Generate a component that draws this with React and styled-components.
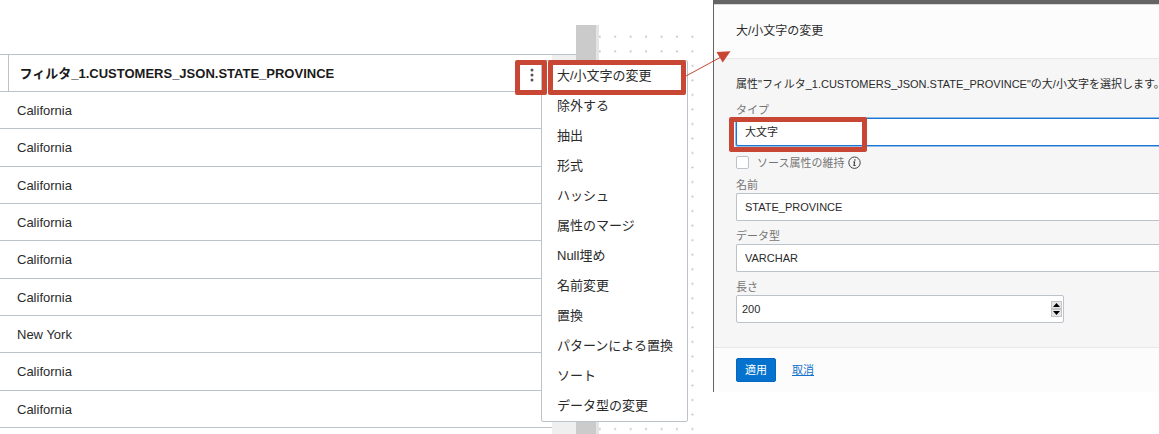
import React from "react";
import styled, { createGlobalStyle, css } from "styled-components";

const accent = "#c74634";
const line = "#bcc2c9";
const sans = `"Liberation Sans", "Noto Sans CJK JP", sans-serif`;

const GlobalStyle = createGlobalStyle`
  *, *::before, *::after { box-sizing: border-box; }
  body { margin: 0; background: #fff; color: #2b2b2b; font: 13px/16px ${sans}; }
  button, input, select { font: inherit; color: inherit; margin: 0; }
`;

const Page = styled.main`
  display: grid;
  grid-template-columns: minmax(0, 713fr) minmax(0, 446fr);
  min-height: 100vh;
  overflow: hidden;
`;

const Workspace = styled.section`
  position: relative;
  display: flex;
  padding: 25px 18px 0 0;
`;

const DataPane = styled.div`
  flex: 1;
  min-width: 0;
  margin-top: 29px;
  display: flex;
  align-items: stretch;
`;

const Table = styled.table`
  width: 100%;
  height: 374px;
  border-collapse: collapse;
  table-layout: fixed;
`;

const Gutter = styled.div`
  width: 24px;
  background: #efefef;
  border-top: 1px solid ${line};
`;

const TableWrap = styled.div`
  flex: 1;
  min-width: 0;
`;

const EdgeHead = styled.th`
  width: 8px;
  height: 37px;
  padding: 0;
  border: 1px solid ${line};
  border-left: 0;
`;

const ColumnHead = styled.th`
  padding: 2px 12px 0 11px;
  border: 1px solid ${line};
  border-right: 0;
  text-align: left;
  color: #1a1a1a;
`;

const HeadContent = styled.div`
  display: flex;
  align-items: center;
  justify-content: space-between;
`;

const Cell = styled.td`
  height: 37px;
  padding: 2px 17px 0;
  border-bottom: 1px solid ${line};
`;

const outlined = css`
  position: relative;
  &::after {
    content: "";
    position: absolute;
    border: 5px solid ${accent};
    border-radius: 2px;
    pointer-events: none;
  }
`;

const KebabButton = styled.button`
  ${outlined}
  z-index: 1;
  display: flex;
  align-items: center;
  justify-content: center;
  width: 16px;
  height: 20px;
  padding: 0;
  border: 0;
  background: none;
  &::after { inset: -4px -7px -11px -9px; }
`;

const KebabIcon = styled.svg`
  margin-bottom: -2px;
`;

const Scrollbar = styled.div`
  width: 23px;
  background: #cbcbcb;
  border-right: 3px solid #e4e4e4;
`;

const DotCanvas = styled.svg`
  width: 96px;
  height: auto;
  align-self: stretch;
`;

const Menu = styled.div`
  position: absolute;
  top: 60px;
  right: 25px;
  width: 147px;
  background: #fff;
  border: 1px solid ${line};
  border-radius: 2px;
`;

const MenuItem = styled.button`
  display: block;
  width: 100%;
  height: 30px;
  padding: 0 15px;
  border: 0;
  background: none;
  text-align: left;
  white-space: nowrap;
  ${(p) => p.$marked && outlined}
  &::after { inset: -1px 1px -4px 6px; }
`;

const Arrow = styled.svg`
  position: absolute;
  top: 48px;
  right: -19px;
  z-index: 2;
`;

const Dialog = styled.section`
  align-self: start;
  border-top: 4px solid #646464;
  border-left: 1px solid #646464;
  background: #fcfcfc;
  font-size: 11px;
`;

const DialogHeader = styled.header`
  padding: 18px 22px;
  border-top: 1px solid #d5d8da;
  border-bottom: 1px solid #e8e8e8;
`;

const DialogTitle = styled.h2`
  margin: 0;
  font-size: 12px;
  font-weight: 400;
  line-height: 17px;
`;

const DialogBody = styled.form`
  display: flex;
  flex-direction: column;
  gap: 7px;
  padding: 17px 0 24px 22px;
  background: #f6f6f6;
`;

const Description = styled.p`
  margin: 0 0 3px;
  white-space: nowrap;
  font-feature-settings: "halt";
`;

const Field = styled.div`
  display: flex;
  flex-direction: column;
`;

const Label = styled.label`
  color: #757575;
`;

const ControlFrame = styled.div`
  display: flex;
  ${(p) => p.$marked && outlined}
  &::after { top: -1px; left: -7px; width: 138px; height: 35px; }
`;

const control = css`
  appearance: none;
  width: 100%;
  height: 28px;
  padding: 0 8px;
  border: 1px solid ${line};
  border-right: 0;
  border-radius: 2px 0 0 2px;
  outline: 0;
  background: #fff;
`;

const TextInput = styled.input`
  ${control}
`;

const Select = styled.select`
  ${control}
  ${(p) => p.$active && css`
    border-color: #1a76d2;
    box-shadow: 0 0 0 1px #8fbce8;
  `}
`;

const CheckRow = styled.div`
  display: flex;
  align-items: center;
  padding-top: 2px;
  height: 17px;
`;

const Checkbox = styled.input`
  appearance: none;
  width: 13px;
  height: 13px;
  border: 1px solid ${line};
  border-radius: 2px;
  background: #fff;
`;

const CheckLabel = styled(Label)`
  margin: 0 4px 0 8px;
`;

const NumberBox = styled.div`
  display: flex;
  align-items: center;
  width: 328px;
  height: 28px;
  padding-right: 1px;
  border: 1px solid ${line};
  border-radius: 2px;
  background: #fff;
`;

const NumberInput = styled.input`
  flex: 1;
  min-width: 0;
  appearance: textfield;
  padding: 0 5px;
  border: 0;
  outline: 0;
  background: none;
  &::-webkit-inner-spin-button { display: none; }
`;

const Stepper = styled.div`
  display: flex;
  flex-direction: column;
`;

const StepButton = styled.button`
  display: flex;
  align-items: center;
  justify-content: center;
  width: 11px;
  height: 8px;
  padding: 0;
  border: 1px solid #c4c4c4;
  background: #e6e6e6;
`;

const DialogFooter = styled.footer`
  display: flex;
  align-items: center;
  gap: 16px;
  padding: 10px 22px;
  border-top: 1px solid #e8e8e8;
`;

const ApplyButton = styled.button`
  height: 24px;
  padding: 0 8px;
  border: 1px solid #0567c0;
  border-radius: 2px;
  background: #0572ce;
  color: #fff;
`;

const CancelLink = styled.a`
  color: #1271cb;
`;

const rows = [
  "California", "California", "California", "California", "California",
  "California", "New York", "California", "California",
];

const actions = [
  "大/小文字の変更", "除外する", "抽出", "形式", "ハッシュ", "属性のマージ",
  "Null埋め", "名前変更", "置換", "パターンによる置換", "ソート", "データ型の変更",
];

function InfoIcon() {
  return (
    <svg width="13" height="13" viewBox="0 0 13 13" fill="none" aria-hidden="true">
      <circle cx="6.5" cy="6.7" r="5.7" stroke="#444" strokeWidth="1" />
      <circle cx="6.9" cy="4" r="0.8" fill="#333" />
      <path d="M5.2 6H6.6L6 9.5H7.6" stroke="#333" strokeWidth="1.1" />
    </svg>
  );
}

function StepIcon({ down }) {
  return (
    <svg width="7" height="4" viewBox="0 0 7 4" aria-hidden="true">
      <path d={down ? "M0 0H7L3.5 4Z" : "M0 4H7L3.5 0Z"} fill="#000" />
    </svg>
  );
}

function DataTable() {
  return (
    <Table>
      <thead>
        <tr>
          <EdgeHead />
          <ColumnHead scope="col">
            <HeadContent>
              フィルタ_1.CUSTOMERS_JSON.STATE_PROVINCE
              <KebabButton type="button" aria-label="アクション">
                <KebabIcon width="4" height="14" viewBox="0 0 4 14" fill="#555">
                  <circle cx="2" cy="2" r="1.5" />
                  <circle cx="2" cy="7" r="1.5" />
                  <circle cx="2" cy="12" r="1.5" />
                </KebabIcon>
              </KebabButton>
            </HeadContent>
          </ColumnHead>
        </tr>
      </thead>
      <tbody>
        {rows.map((value, i) => (
          <tr key={i}>
            <Cell colSpan={2}>{value}</Cell>
          </tr>
        ))}
      </tbody>
    </Table>
  );
}

function CaseDialog() {
  return (
    <Dialog role="dialog" aria-labelledby="dialog-title">
      <DialogHeader>
        <DialogTitle id="dialog-title">大/小文字の変更</DialogTitle>
      </DialogHeader>
      <DialogBody>
        <Description>
          属性"フィルタ_1.CUSTOMERS_JSON.STATE_PROVINCE"の大/小文字を選択します。
        </Description>
        <Field>
          <Label htmlFor="case-type">タイプ</Label>
          <ControlFrame $marked>
            <Select id="case-type" $active>
              <option>大文字</option>
            </Select>
          </ControlFrame>
        </Field>
        <CheckRow>
          <Checkbox id="keep-source" type="checkbox" />
          <CheckLabel htmlFor="keep-source">ソース属性の維持</CheckLabel>
          <InfoIcon />
        </CheckRow>
        <Field>
          <Label htmlFor="attr-name">名前</Label>
          <TextInput id="attr-name" type="text" defaultValue="STATE_PROVINCE" />
        </Field>
        <Field>
          <Label htmlFor="data-type">データ型</Label>
          <Select id="data-type">
            <option>VARCHAR</option>
          </Select>
        </Field>
        <Field>
          <Label htmlFor="length">長さ</Label>
          <NumberBox>
            <NumberInput id="length" type="number" defaultValue="200" />
            <Stepper>
              <StepButton type="button" aria-label="増やす"><StepIcon /></StepButton>
              <StepButton type="button" aria-label="減らす"><StepIcon down /></StepButton>
            </Stepper>
          </NumberBox>
        </Field>
      </DialogBody>
      <DialogFooter>
        <ApplyButton type="button">適用</ApplyButton>
        <CancelLink href="#">取消</CancelLink>
      </DialogFooter>
    </Dialog>
  );
}

export default function App() {
  return (
    <>
      <GlobalStyle />
      <Page>
        <Workspace>
          <DataPane>
            <TableWrap><DataTable /></TableWrap>
            <Gutter />
          </DataPane>
          <Scrollbar />
          <DotCanvas aria-hidden="true">
            <defs>
              <pattern id="dots" x="8.5" y="4.5" width="15.45" height="14.53" patternUnits="userSpaceOnUse">
                <circle cx="7.7" cy="7.3" r="0.9" fill="#b4b4b4" />
              </pattern>
            </defs>
            <rect width="100%" height="100%" fill="url(#dots)" />
          </DotCanvas>
          <Menu role="menu">
            {actions.map((name, i) => (
              <MenuItem key={name} type="button" role="menuitem" $marked={i === 0}>{name}</MenuItem>
            ))}
          </Menu>
          <Arrow width="48" height="32" viewBox="0 0 48 32" aria-hidden="true">
            <path d="M2 28L37 9" stroke={accent} strokeWidth="1" />
            <path d="M32.5 4L46.5 3.3L38.7 14.5Z" fill={accent} />
          </Arrow>
        </Workspace>
        <CaseDialog />
      </Page>
    </>
  );
}
